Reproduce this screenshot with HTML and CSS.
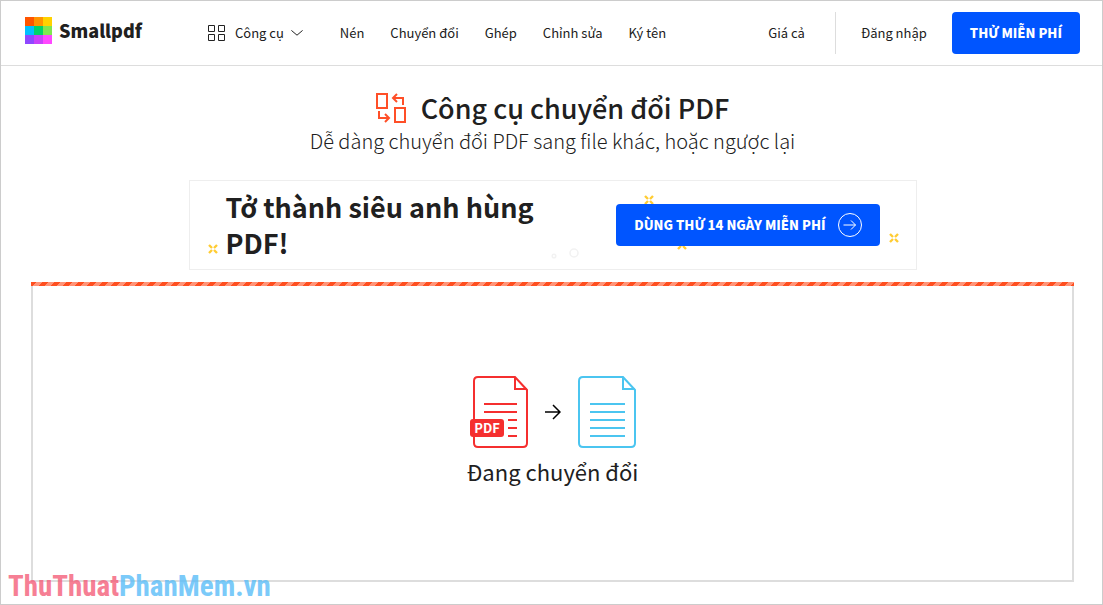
FILE: index.html
```html
<!DOCTYPE html>
<html lang="vi">
<head>
<meta charset="utf-8">
<meta name="viewport" content="width=device-width, initial-scale=1">
<title>Công cụ chuyển đổi PDF</title>
<link rel="stylesheet" href="styles.css">
</head>
<body>
<div class="page">
  <header class="header">
    <a class="brand" href="#">
      <svg class="brand-mark" viewBox="0 0 27 27" shape-rendering="crispEdges" aria-hidden="true">
        <path fill="#ff5500" d="M0 0h9v9H0z"/><path fill="#ff9400" d="M9 0h9v9H9z"/><path fill="#ffd200" d="M18 0h9v9h-9z"/>
        <path fill="#00c0ff" d="M0 9h9v9H0z"/><path fill="#00d26a" d="M9 9h9v9H9z"/><path fill="#80e650" d="M18 9h9v9h-9z"/>
        <path fill="#8f47ff" d="M0 18h9v9H0z"/><path fill="#c840fa" d="M9 18h9v9H9z"/><path fill="#ff48ff" d="M18 18h9v9h-9z"/>
      </svg>
      <span class="brand-name">Smallpdf</span>
    </a>
    <nav class="nav">
      <button class="tools" type="button">
        <svg class="grid-icon" viewBox="0 0 17 17" fill="none" stroke="#222" aria-hidden="true"><path d="M.5.5h6v6h-6zM10.5.5h6v6h-6zM.5 9.5h6v6h-6zM10.5 9.5h6v6h-6z"/></svg>
        <span>Công cụ</span>
        <svg class="chevron" viewBox="0 0 12 6" fill="none" stroke="#222" aria-hidden="true"><path d="M.4.4 6 5.2 11.6.4"/></svg>
      </button>
      <a href="#">Nén</a>
      <a href="#">Chuyển đổi</a>
      <a href="#">Ghép</a>
      <a href="#">Chỉnh sửa</a>
      <a href="#">Ký tên</a>
    </nav>
    <div class="account">
      <a class="price" href="#">Giá cả</a>
      <a class="login" href="#">Đăng nhập</a>
      <button class="button" type="button">THỬ MIỄN PHÍ</button>
    </div>
  </header>

  <main class="main">
    <div class="title-row">
      <svg class="title-icon" viewBox="0 0 30 30" fill="none" stroke="#ff4f28" stroke-width="2" aria-hidden="true">
        <path d="M1 1h10v14H1zM19 15h10v14H19zM27 12V5H17M21 1l-4 4 4 4M3 18v7h10M9 21l4 4-4 4"/>
      </svg>
      <h1 class="title">Công cụ chuyển đổi PDF</h1>
    </div>
    <p class="subtitle">Dễ dàng chuyển đổi PDF sang file khác, hoặc ngược lại</p>

    <section class="banner">
      <svg class="confetti" viewBox="0 0 726 88" fill="none" aria-hidden="true">
        <g stroke="#fc3" stroke-width="2.4">
          <path d="m19 64 3 3m2 2 3 3m0-8-3 3m-2 2-3 3"/>
          <path d="m455 15 3 3m2 2 3 3m0-8-3 3m-2 2-3 3"/>
          <path d="m488 60 3 3m2 2 3 3m0-8-3 3m-2 2-3 3"/>
          <path d="m700 53 3 3m2 2 3 3m0-8-3 3m-2 2-3 3"/>
        </g>
        <g stroke="#f2f2f2" stroke-width="1.5"><circle cx="364" cy="75" r="1.8"/><circle cx="384" cy="72" r="4"/></g>
      </svg>
      <h2 class="banner-title">Tở thành siêu anh hùng PDF!</h2>
      <button class="button trial" type="button">
        <span>DÙNG THỬ 14 NGÀY MIỄN PHÍ</span>
        <svg class="trial-icon" viewBox="0 0 24 24" fill="none" stroke="#fff" aria-hidden="true"><circle cx="12" cy="12" r="11.5"/><path d="M5.5 12h12M13 7.5l4.5 4.5-4.5 4.5"/></svg>
      </button>
    </section>

    <section class="drop">
      <div class="files">
        <svg class="pdf-file" viewBox="0 0 58 72" fill="none" stroke="#f52f2f" stroke-width="2" aria-hidden="true">
          <path d="M4 50V5q0-4 4-4h37l12 13v53q0 4-4 4H8q-4 0-4-4v-7M45 1v12h12M14 28h33M14 36h33M38 44h9M38 52h9M38 60h9"/>
          <rect x="0" y="43" width="34" height="18" rx="3" fill="#f52f2f" stroke="none"/>
          <text class="pdf-label" x="17" y="57" text-anchor="middle">PDF</text>
        </svg>
        <svg class="arrow" viewBox="0 0 16 16" fill="none" stroke="#000" stroke-width="1.5" aria-hidden="true"><path d="M0 8h15M8 1l7 7-7 7"/></svg>
        <svg class="doc-file" viewBox="0 0 58 72" fill="none" stroke="#4bc5f0" stroke-width="2" aria-hidden="true">
          <path d="M45 1H5Q1 1 1 5v62q0 4 4 4h48q4 0 4-4V14zM45 1v12h12M12 28h35M12 36h35M12 44h35M12 52h35M12 60h35"/>
        </svg>
      </div>
      <p class="status">Đang chuyển đổi</p>
    </section>
  </main>
  <div class="watermark"><span class="watermark-a">ThuThuat</span><span class="watermark-b">PhanMem.vn</span></div>
</div>
</body>
</html>
```
FILE: styles.css
```css
* { box-sizing: border-box; }
body {
  margin: 0;
  background: #fff;
  color: #202020;
  font-family: "Noto Sans CJK SC", "Noto Sans", sans-serif;
  font-size: 13px;
  line-height: 20px;
}
h1, h2, p { margin: 0; }
a { color: inherit; text-decoration: none; }
button { font: inherit; color: inherit; border: 0; background: none; padding: 0; cursor: pointer; }
svg { display: block; flex: none; }

.page {
  position: relative;
  display: flex;
  flex-direction: column;
  min-height: 100vh;
  border: 1px solid #ccc;
}
.header {
  display: flex;
  align-items: center;
  height: 65px;
  padding: 0 22px 0 24px;
  border-bottom: 1px solid #ddd;
}
.brand { display: flex; align-items: center; gap: 7px; margin-bottom: 6px; }
.brand-mark { width: 27px; height: 27px; }
.brand-name { font: 900 18px/27px "Noto Sans CJK SC", sans-serif; }
.nav { display: flex; align-items: center; gap: 26px; margin-left: 66px; }
.tools { display: flex; align-items: center; gap: 10px; margin-right: 11px; }
.grid-icon { width: 17px; height: 17px; }
.chevron { width: 12px; height: 6px; margin-left: -3px; }
.account { display: flex; align-items: center; margin-left: auto; }
.price { padding-right: 30px; }
.login { padding: 11px 25px; border-left: 1px solid #ddd; }
.button {
  height: 42px;
  padding: 0 18px;
  border-radius: 4px;
  background: #05f;
  color: #fff;
  font-weight: 900;
}

.main {
  flex: 1;
  display: flex;
  flex-direction: column;
  align-items: center;
  padding: 24px 28px 22px 30px;
}
.title-row { display: flex; align-items: center; gap: 15px; }
.title-icon { width: 30px; height: 30px; }
.title { font-size: 27px; line-height: 36px; font-weight: 500; }
.subtitle { font-size: 20px; line-height: 30px; font-weight: 300; }
.banner {
  position: relative;
  display: flex;
  align-items: center;
  justify-content: space-between;
  width: 100%;
  max-width: 728px;
  height: 90px;
  margin-top: 24px;
  padding: 0 36px;
  border: 1px solid #eee;
}
.confetti { position: absolute; inset: 0; width: 100%; height: 100%; }
.banner-title { position: relative; width: 340px; font-size: 27px; line-height: 36px; font-weight: 700; }
.trial { position: relative; display: flex; align-items: center; gap: 12px; }
.trial-icon { width: 24px; height: 24px; }
.drop {
  position: relative;
  flex: 1;
  display: flex;
  flex-direction: column;
  align-items: center;
  justify-content: center;
  width: 100%;
  margin-top: 12px;
  padding-top: 2px;
  border: 2px solid #ddd;
  border-top: 0;
}
.drop::before {
  content: "";
  position: absolute;
  top: 0;
  left: -2px;
  right: -2px;
  height: 4px;
  background: linear-gradient(135deg, #ff4f20 25%, #ff9478 25% 50%, #ff4f20 50% 75%, #ff9478 75%) 0 0 / 12px 12px;
}
.files { display: flex; align-items: center; gap: 17px; }
.pdf-file, .doc-file { width: 58px; height: 72px; }
.pdf-label { fill: #fff; stroke: none; font-size: 13px; font-weight: 700; }
.arrow { width: 16px; height: 16px; }
.status { margin-top: 6px; font-size: 22px; line-height: 34px; }
.watermark {
  position: absolute;
  left: 7px;
  bottom: 0;
  font: 700 29px/36px "Roboto Condensed", Roboto, sans-serif;
  opacity: .8;
}
.watermark-a { color: #f4607a; }
.watermark-b { color: #5bbdf8; }
```
